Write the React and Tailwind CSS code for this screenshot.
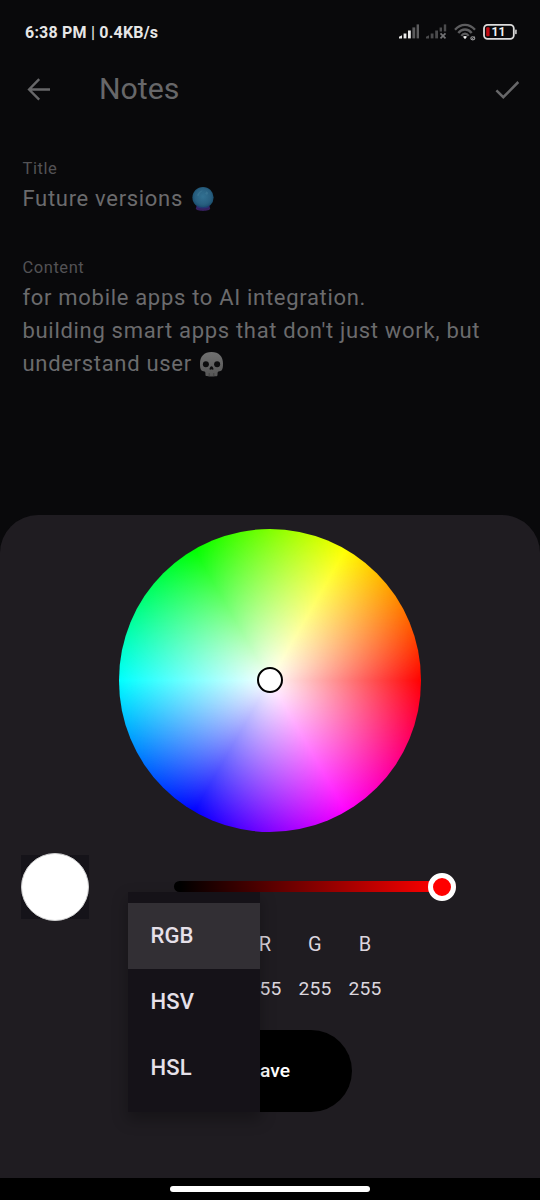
const MODES = ["RGB", "HSV", "HSL"];
const CHANNELS = ["R", "G", "B"];

function StatusBar() {
  return (
    <div className="flex h-[56px] items-center justify-between pt-[10px] pr-[21px] pl-[25px]">
      <span className="text-[16px] leading-[20px] font-bold tracking-[0.2px] text-[#e6e6e6]">
        6:38 PM<span className="font-medium"> | </span>0.4KB/s
      </span>
      <svg width="120" height="20" viewBox="0 0 120 20">
        <g fill="#e8e8e8">
          <path d="M0 15.4v-1.6l3-1.6v3.2z" />
          <rect x="4.6" y="10.5" width="2.8" height="4.9" />
          <rect x="9" y="7.5" width="2.8" height="7.9" />
        </g>
        <g fill="#5b5b5d">
          <rect x="13.4" y="4.4" width="2.8" height="11" />
          <rect x="17.6" y="1.4" width="2.4" height="14" />
        </g>
        <g fill="#4b4b4d">
          <path d="M27 15.4v-1.6l3-1.6v3.2z" />
          <rect x="31.7" y="10.5" width="2.8" height="4.9" />
          <rect x="36.2" y="7.5" width="2.8" height="7.9" />
          <rect x="40.6" y="4.5" width="2.4" height="4" />
          <rect x="44.8" y="1.4" width="2.4" height="7" />
        </g>
        <path d="M41.5 10.3l5 5m0-5l-5 5" stroke="#727274" strokeWidth="1.7" />
        <g fill="none" stroke="#5d5d5f" strokeWidth="2.3">
          <path d="M56 6.8C61.8.2 70.2.2 76 6.8" />
          <path d="M59.3 10C63 5.3 69 5.3 72.7 10" />
          <path d="M62.4 12.8C64.4 10 67.6 10 69.6 12.8" />
        </g>
        <path d="M64 13.8q2-1.4 4 0L66 16.3z" fill="#f4f4f4" />
        <ellipse cx="73.8" cy="15.3" rx="2" ry="1.6" fill="none" stroke="#99999b" strokeWidth="1.1" />
        <path d="M72 16.8l3.6-3" stroke="#99999b" strokeWidth="0.9" />
        <rect x="85" y="1.9" width="29.8" height="13.9" rx="3.6" fill="none" stroke="#dcdcdc" strokeWidth="1.8" />
        <rect x="116" y="6.4" width="1.8" height="4.8" rx="0.8" fill="#bcbcbc" />
        <rect x="87.2" y="4.3" width="3.4" height="9" rx="1" fill="#c20a12" />
        <text x="99.4" y="13.2" textAnchor="middle" fontSize="12" fontWeight="700" fill="#f0f0f0">11</text>
      </svg>
    </div>
  );
}

function AppBar() {
  return (
    <header className="flex h-[66px] items-center pr-[20px] pl-[27px] text-[#676769]">
      <svg width="24" height="24" viewBox="0 0 24 24" fill="none" stroke="currentColor" strokeWidth="2.4">
        <path d="M12.2 2.1L2.1 12.5l10.1 10.1M2.3 12.5H23" />
      </svg>
      <h1 className="ml-[48px] flex-1 text-[30.25px] leading-[38px]">Notes</h1>
      <svg width="26" height="22" viewBox="0 0 26 22" fill="none" stroke="currentColor" strokeWidth="2.5">
        <path d="M2.4 12.3l6.9 6.9L24.3 4" />
      </svg>
    </header>
  );
}

function CrystalBall() {
  return (
    <svg className="ml-[8px] h-[26px] w-[24px]" viewBox="0 0 24 26">
      <defs>
        <radialGradient id="ball" cx=".5" cy=".45" r=".58">
          <stop offset="0" stopColor="#327192" />
          <stop offset=".65" stopColor="#285f80" />
          <stop offset="1" stopColor="#154866" />
        </radialGradient>
      </defs>
      <path d="M6 18.5h12l1.2 4.1c0 3.2-14.4 3.2-14.4 0z" fill="#36205f" />
      <circle cx="12" cy="11.5" r="10.6" fill="url(#ball)" />
      <path d="M5.2 19.2q6.8 4.3 13.6 0l-1.3 2.2q-5.5 2-11 0z" fill="#243774" />
      <path d="M15.5 5.2l1.8 1.8-1.3 2-2-1.2zM6 9.2q2-4.6 6-4.7-3.6 2-4.6 5.8z" fill="#377290" />
    </svg>
  );
}

function Skull() {
  return (
    <svg className="ml-[7px] h-[26px] w-[25px]" viewBox="0 0 25 26">
      <defs>
        <linearGradient id="bone" x2="0" y2="1">
          <stop stopColor="#707070" />
          <stop offset="1" stopColor="#565656" />
        </linearGradient>
      </defs>
      <path d="M12.5 1C5 1 1 5.6 1 12.3c0 3.4.2 6 1.5 7.2 1 .9 3.2.6 3.7 1.6.5 1.1-.1 3.3.7 3.9.8.6 10.4.6 11.2 0s.2-2.8.7-3.9c.5-1 2.7-.7 3.7-1.6 1.3-1.2 1.5-3.8 1.5-7.2C24 5.6 20 1 12.5 1z" fill="url(#bone)" />
      <g fill="#0d0d0e">
        <circle cx="6.9" cy="13.2" r="3" />
        <circle cx="18.1" cy="13.2" r="3" />
        <path d="M12.5 15.2c-.9 0-2 2-2 2.8 0 1 1.4.7 2 .2.6.5 2 .8 2-.2 0-.8-1.1-2.8-2-2.8z" />
      </g>
      <path d="M10.2 22v3M14.8 22v3" stroke="#414141" strokeWidth=".9" />
    </svg>
  );
}

function Note() {
  return (
    <main className="flex h-[393px] flex-col px-[22.5px] pt-[36px]">
      <div className="text-[16.5px] leading-[22px] tracking-[0.55px] text-[#535255]">Title</div>
      <div className="mt-[2px] flex h-[33px] items-center text-[22px] leading-[33px] tracking-[0.69px] whitespace-nowrap text-[#6b6b6d]">
        Future versions <CrystalBall />
      </div>
      <div className="mt-[42px] text-[16.5px] leading-[22px] tracking-[0.55px] text-[#535255]">Content</div>
      <div className="mt-[2px] text-[22px] leading-[33px] tracking-[0.69px] whitespace-nowrap text-[#6b6b6d]">
        <p>for mobile apps to AI integration.</p>
        <p>building smart apps that don't just work, but</p>
        <p className="flex h-[33px] items-center">understand user <Skull /></p>
      </div>
    </main>
  );
}

function ColorWheel() {
  return (
    <div className="flex size-[302.5px] items-center justify-center rounded-full bg-[radial-gradient(closest-side,#fff,rgba(255,255,255,0)),conic-gradient(from_90deg,#f00,#f0f,#00f,#0ff,#0f0,#ff0,#f00)]">
      <div className="size-[26px] rounded-full border-2 border-black bg-white" />
    </div>
  );
}

function ModeMenu() {
  return (
    <ul className="absolute top-[377px] left-[128px] w-[132px] bg-[#151218] py-[11px] shadow-[0_7px_14px_1px_rgba(0,0,0,0.27)]">
      {MODES.map((mode, i) => (
        <li
          key={mode}
          className={`flex h-[66px] items-center pb-[2px] pl-[22.5px] text-[22px] font-medium tracking-[0.1px] text-[#e6e0e9] ${i === 0 ? "bg-[#322f34]" : ""}`}
        >
          {mode}
        </li>
      ))}
    </ul>
  );
}

function PickerSheet() {
  return (
    <section className="relative flex h-[663px] flex-col items-center rounded-t-[38px] bg-[#1f1c21] pt-[14px]">
      <ColorWheel />
      <div className="mt-[20.25px] flex h-[70px] w-full items-center pr-[84.5px] pl-[21px]">
        <div className="flex h-[64px] w-[68px] items-center justify-center bg-[#151319]">
          <div className="size-[68.5px] shrink-0 rounded-full border border-[#cfcfd0] bg-white" />
        </div>
        <div className="ml-[85px] flex h-[11px] flex-1 items-center justify-end rounded-full bg-[linear-gradient(90deg,#000_2%,#f00_94%)]">
          <div className="size-[28px] shrink-0 rounded-full border-5 border-white bg-[#f00]" />
        </div>
      </div>
      <div className="mt-[0.25px] grid w-full grid-cols-[50px_50px_50px] pl-[240px] text-center text-[19.25px] leading-[45px] tracking-[0.2px] text-[#dcd6de]">
        {CHANNELS.map((c) => (
          <div key={c} className="flex h-[108px] flex-col">
            <span className="text-[20px]">{c}</span>
            <span className="mt-[-1px]">255</span>
          </div>
        ))}
      </div>
      <button className="mr-[0.5px] h-[82px] w-[164.5px] rounded-full bg-black pt-[1px] pr-[1px] text-[19.25px] font-medium text-white">
        Save
      </button>
      <ModeMenu />
    </section>
  );
}

export default function App() {
  return (
    <div className="flex h-[1200px] w-[540px] flex-col overflow-hidden bg-[#09090b] font-['Roboto',sans-serif]">
      <StatusBar />
      <AppBar />
      <Note />
      <PickerSheet />
      <footer className="flex flex-1 justify-center bg-black pt-[8px]">
        <div className="h-[6px] w-[200px] rounded-full bg-white" />
      </footer>
    </div>
  );
}
